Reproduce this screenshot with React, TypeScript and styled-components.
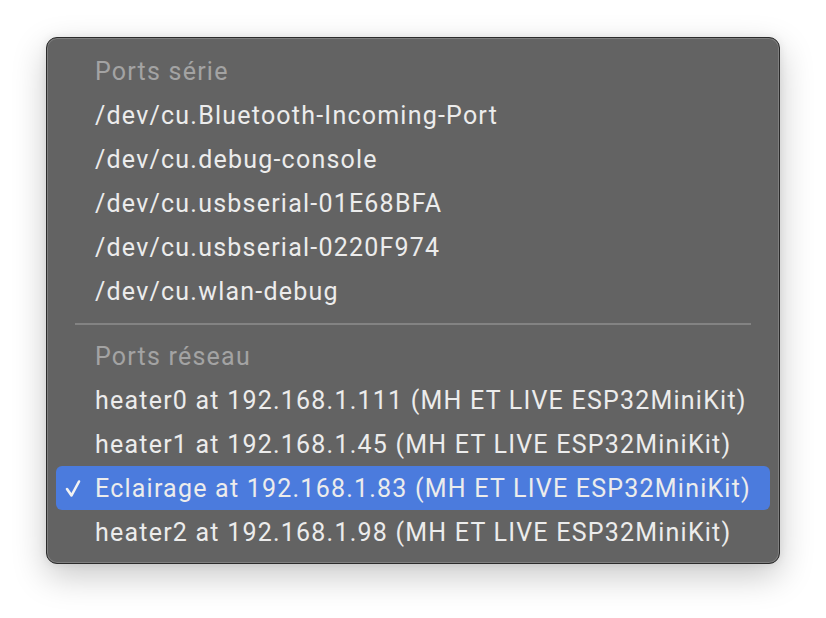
import React from "react";
import styled, { createGlobalStyle } from "styled-components";

const Global = createGlobalStyle`
  html, body { margin: 0; padding: 0; background: #ffffff; }
  body { font-family: Roboto, Inter, "Noto Sans", sans-serif; }
`;

const Page = styled.div`
  padding: 37px 0 0 46px;
  width: 826px;
  height: 618px;
  box-sizing: border-box;
`;

const Menu = styled.div`
  width: 734px;
  height: 527px;
  box-sizing: border-box;
  background: #636363;
  border: 1px solid #2b2b2b;
  border-radius: 11px;
  box-shadow: inset 0 0 0 1px rgba(255, 255, 255, 0.18),
    0 12px 34px rgba(0, 0, 0, 0.22), 0 0 8px rgba(0, 0, 0, 0.08);
  padding: 11px 9px 9px 9px;
  display: flex;
  flex-direction: column;
`;

const Row = styled.div<{ $selected?: boolean; $header?: boolean }>`
  height: 44px;
  flex: 0 0 44px;
  position: relative;
  display: flex;
  align-items: center;
  padding-left: 39px;
  border-radius: 6px;
  font-size: 25px;
  letter-spacing: 1.22px;
  white-space: nowrap;
  color: ${(p) => (p.$header ? "#a3a3a3" : "#ececec")};
  background: ${(p) => (p.$selected ? "#4b7bdd" : "transparent")};
`;

const Check = styled.svg`
  position: absolute;
  left: 9px;
  top: 13px;
`;

const Separator = styled.div`
  flex: 0 0 21px;
  display: flex;
  align-items: center;
  padding: 0 19px 0 19px;
  &::after {
    content: "";
    flex: 1;
    height: 2px;
    margin-top: 1px;
    background: #838383;
  }
`;

const serial = [
  "/dev/cu.Bluetooth-Incoming-Port",
  "/dev/cu.debug-console",
  "/dev/cu.usbserial-01E68BFA",
  "/dev/cu.usbserial-0220F974",
  "/dev/cu.wlan-debug",
];

const network = [
  { label: "heater0 at 192.168.1.111 (MH ET LIVE ESP32MiniKit)" },
  { label: "heater1 at 192.168.1.45 (MH ET LIVE ESP32MiniKit)" },
  { label: "Eclairage at 192.168.1.83 (MH ET LIVE ESP32MiniKit)", selected: true },
  { label: "heater2 at 192.168.1.98 (MH ET LIVE ESP32MiniKit)" },
];

export default function App() {
  return (
    <>
      <Global />
      <Page>
        <Menu>
          <Row $header>Ports série</Row>
          {serial.map((s) => (
            <Row key={s}>{s}</Row>
          ))}
          <Separator />
          <Row $header>Ports réseau</Row>
          {network.map((n) => (
            <Row key={n.label} $selected={n.selected}>
              {n.selected && (
                <Check width="16" height="19" viewBox="0 0 16 19">
                  <path
                    d="M2 10 L6.5 16.5 L14 2.5"
                    fill="none"
                    stroke="#f2f2f2"
                    strokeWidth="2.6"
                    strokeLinecap="round"
                    strokeLinejoin="round"
                  />
                </Check>
              )}
              {n.label}
            </Row>
          ))}
        </Menu>
      </Page>
    </>
  );
}
